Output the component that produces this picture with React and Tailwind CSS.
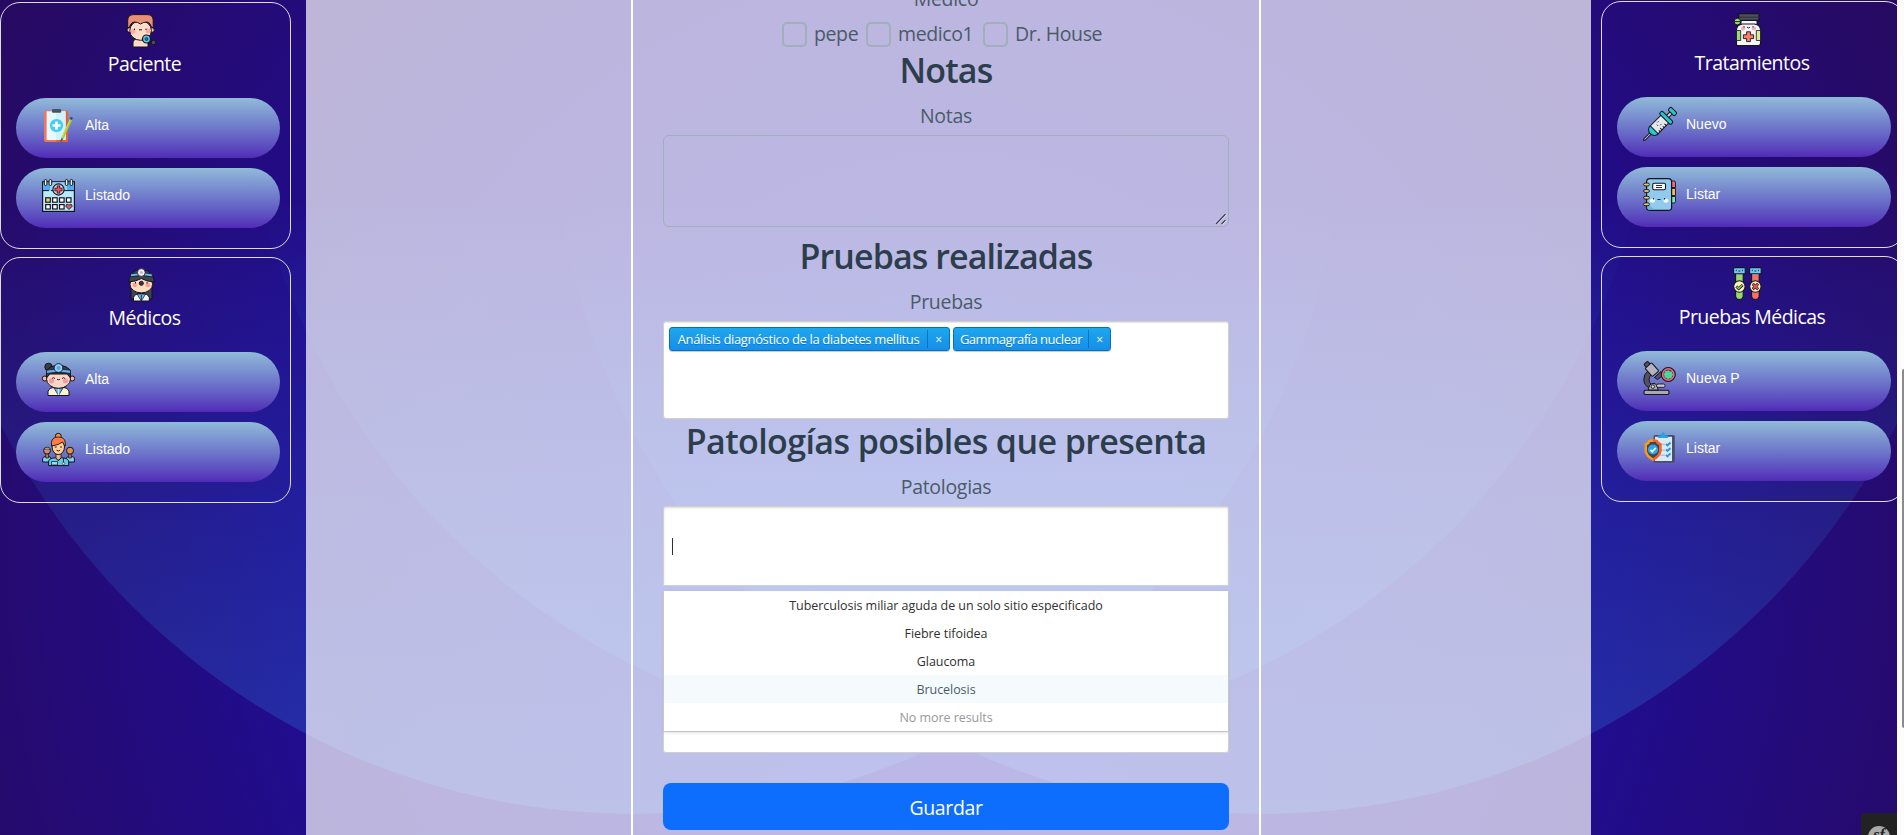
import React from "react";

const K = "#15131c";

function Icon({ children, className = "" }) {
  return (
    <svg viewBox="0 0 33 33" className={`h-[33px] w-[33px] shrink-0 overflow-visible ${className}`} fill="none">
      {children}
    </svg>
  );
}

const PatientIcon = () => (
  <Icon>
    <path d="M8 33v-4q0-4 5-4h5q5 0 5 4v4z" fill="#ffdcc8" stroke={K} />
    <circle cx="4.3" cy="16" r="2.3" fill="#ffc9b4" stroke={K} />
    <circle cx="27" cy="16" r="2.3" fill="#ffc9b4" stroke={K} />
    <ellipse cx="15.6" cy="16.5" rx="10.8" ry="9.8" fill="#ffdcc8" stroke={K} />
    <path d="M2.700 14V6.500q0-5.900 6-5.900h13.500q6 0 6 5.900V14q-2.200-.5-3.200-4-1-2-3.500-2-3 0-6 2-3-2-6-2-2.500 0-3.500 2-1 3.500-3.300 4z" fill="#e98f76" stroke={K} />
    <circle cx="8" cy="17.500" r="2.400" fill="#ffa6a6" />
    <circle cx="23" cy="17" r="2.400" fill="#ffa6a6" />
    <path d="M9.500 14.600v1.400M21 14.600v1.400M14 15.800h3" stroke={K} />
    <path d="M25 27l3.500 1.500" stroke={K} strokeWidth="2" />
    <circle cx="28.400" cy="28.500" r="2.300" fill="#4a4a5c" stroke={K} />
    <circle cx="21.500" cy="25" r="4" fill="#62c4e4" stroke={K} strokeWidth="1.200" />
    <circle cx="21.500" cy="25" r="1.500" fill="#2b7ba8" stroke={K} strokeWidth=".6" />
  </Icon>
);

const ClipboardIcon = () => (
  <Icon>
    <rect x="2" y="1.500" width="24" height="31.500" rx="2" fill="#f4755c" />
    <path d="M14 33h10a2 2 0 002-2V3.500a2 2 0 00-2-2z" fill="#e0603f" />
    <rect x="4.600" y="2.300" width="19" height="28.700" fill="#e6fafe" />
    <path d="M14 2.300h9.600V31H14z" fill="#d3f1f8" />
    <rect x="10" y="0" width="9.200" height="3.800" rx="1" fill="#46565f" />
    <circle cx="14.500" cy="16.500" r="6.600" fill="#45ccf0" />
    <path d="M14.500 12.500v8M10.500 16.500h8" stroke="#fff" strokeWidth="2.600" />
    <path d="M29 10.500L20.300 29.500" stroke="#a9c93a" strokeWidth="2.600" />
    <path d="M28.300 10.300L19.800 29" stroke="#cfe15a" strokeWidth="1" />
    <path d="M28.800 10.600l1-2.300" stroke="#4a4a4a" strokeWidth="2.600" />
    <path d="M20.300 29.300l-1.300 3" stroke="#555e3a" strokeWidth="1.800" />
  </Icon>
);

const CalendarIcon = () => (
  <Icon>
    <rect x=".6" y="2.800" width="31.800" height="29.600" fill="#b9eafc" stroke={K} strokeWidth="1.200" />
    <path d="M1.200 3.400h30.600v8H1.200z" fill="#51aaf0" />
    <path d="M8 3.400h17v8H8z" fill="#8fd3fa" />
    <path d="M1 11.600h6M9 11.600h23" stroke={K} strokeWidth="1" />
    {[3.600, 8.400, 24.600, 29.400].map((x) => (
      <rect key={x} x={x - 1.300} y=".5" width="2.600" height="6" rx="1.300" fill="#eef2f6" stroke={K} />
    ))}
    <circle cx="16.500" cy="10.500" r="5.600" fill="#dcd3d8" stroke={K} strokeWidth="1.100" />
    <path d="M16.500 6.500v8M12.500 10.500h8" stroke={K} strokeWidth="3.400" />
    <path d="M16.500 7.200v6.600M13.200 10.500h6.600" stroke="#f0556a" strokeWidth="1.800" />
    {[3.700, 10.600, 17.500, 24.400].map((x, i) => (
      <rect key={x} x={x} y="18.800" width="4.600" height="4.400" fill={i === 0 ? "#f5d76b" : "#fff"} stroke={K} strokeWidth="1.200" />
    ))}
    {[3.700, 10.600, 17.500].map((x) => (
      <rect key={x} x={x} y="25.600" width="4.600" height="4.400" fill="#fff" stroke={K} strokeWidth="1.200" />
    ))}
    <path d="M27 30.500l-3-3q-.5-2 1.300-2.200 1.200 0 1.700 1 .5-1 1.700-1 1.800.2 1.300 2.200z" fill="#f0556a" stroke={K} strokeWidth=".9" />
  </Icon>
);

const DoctorIcon = () => (
  <Icon>
    <path d="M6 12h21v19H6z" fill="#3c4452" stroke={K} />
    <path d="M8.500 33v-3.500q1-4 7.800-4t8 4V33z" fill="#f4f6fa" stroke={K} />
    <path d="M12 26l4.300 7 4.300-7z" fill="#6db4ee" stroke={K} strokeWidth=".7" />
    <path d="M16.300 27v6" stroke={K} strokeWidth=".8" />
    <ellipse cx="16.300" cy="16.300" rx="11.300" ry="8.600" fill="#fbdcc1" stroke={K} />
    <path d="M3.500 14q.5-4 2-6.500Q9 1.500 16.300 1.500t11 6q1.500 2.500 2 6.500-8-.5-13-3.500-5 3-12.800 3.500z" fill="#3c4452" stroke={K} />
    <path d="M5.500 8.800q11-2.500 21.800 0V6q-11-3-21.800 0z" fill="#6db9f2" stroke={K} strokeWidth=".8" />
    <circle cx="16.300" cy="4.500" r="3.900" fill="#eef0f3" stroke={K} strokeWidth=".8" />
    <circle cx="16.300" cy="4.500" r="1.500" fill="#b9bfc8" />
    <circle cx="9.800" cy="17" r="2.200" fill="#ff9d86" />
    <circle cx="22.800" cy="17" r="2.200" fill="#ff9d86" />
    <path d="M10.500 14v1.400M22 14v1.400" stroke={K} />
    <circle cx="16.300" cy="15.300" r="2.100" fill="#39333e" stroke={K} strokeWidth=".8" />
  </Icon>
);

const NurseIcon = () => (
  <Icon>
    <circle cx="6.500" cy="3.900" r="3.700" fill="#3a3c46" stroke={K} />
    <path d="M6 32.500v-4q1-4 7-4h7.500q5.500 0 6.500 4v4z" fill="#fbf3d2" stroke={K} />
    <path d="M12 25l4.500 7.500L21 25z" fill="#5fb4ee" stroke={K} strokeWidth=".7" />
    <path d="M16.500 26v6" stroke="#c4e6fb" strokeWidth="1.500" />
    <circle cx="2.800" cy="15.500" r="2.500" fill="#fcb9a0" stroke={K} />
    <circle cx="30.200" cy="15.500" r="2.500" fill="#fcb9a0" stroke={K} />
    <ellipse cx="16.500" cy="16" rx="12" ry="9.300" fill="#fdd5c4" stroke={K} />
    <path d="M4.500 14.500V8q3-5.500 12-5.500t12 5.500v6.500q-2-1-3-3.500h-18q-1 2.500-3 3.500z" fill="#3a3c46" stroke={K} />
    <path d="M4.500 10.500q12-2.500 24 0V7.200q-12-3-24 0z" fill="#5fb0f0" stroke={K} strokeWidth=".8" />
    <circle cx="16.500" cy="5" r="4.400" fill="#8fd0fb" stroke={K} strokeWidth=".9" />
    <circle cx="16.500" cy="5" r="2" fill="#5ba7ec" />
    <circle cx="9.500" cy="17.800" r="2.600" fill="#f49aa8" />
    <circle cx="23.500" cy="17.800" r="2.600" fill="#f49aa8" />
    <path d="M10 15.500l1.500-.8 1.500.8M20 15.500l1.500-.8 1.500.8M15 16.200q1.500 1.300 3 0" stroke={K} strokeWidth=".9" />
  </Icon>
);

const TeamIcon = () => (
  <Icon>
    <path d="M.6 29v-3q0-2.500 4.400-2.500T9 26v3zM24 29v-3q0-2.500 4.400-2.500t4 2.500v3z" fill="#7fd4f3" stroke={K} />
    <path d="M3.800 20h2.600v5H3.800zM26.700 20h2.600v5h-2.600z" fill="#c98657" stroke={K} strokeWidth=".8" />
    <circle cx="5" cy="17.700" r="3.400" fill="#cf8f66" stroke={K} />
    <path d="M2 16q3-3.500 6.500 0z" fill="#d9dbe2" stroke={K} strokeWidth=".6" />
    <circle cx="28" cy="17.700" r="3.500" fill="#dd8f52" stroke={K} />
    <circle cx="16.300" cy="3.300" r="3" fill="#ff9440" stroke={K} />
    <path d="M14 20h5v7h-5z" fill="#f7b377" stroke={K} strokeWidth=".8" />
    <ellipse cx="16.300" cy="14" rx="6.200" ry="7.600" fill="#ffcf94" stroke={K} />
    <path d="M9.500 13V9.500Q10 4 16.300 4T23.300 9.500V13q-2-1.500-2.700-4-3.500 3-11.100 4z" fill="#ff7d45" stroke={K} strokeWidth=".9" />
    <path d="M12.700 14h2M18 14h2M14.500 17.200q1.800 1.600 3.600 0" stroke={K} strokeWidth=".9" />
    <path d="M6.600 32.600V28q1-3 7-3.200l2.800 3 2.800-3q6.500.2 7.500 3.200v4.600z" fill="#61cbea" stroke={K} />
    <path d="M9.500 28.500h6V32h-6z" fill="#8be3f8" stroke={K} strokeWidth=".7" />
    <path d="M21.500 25v5" stroke={K} strokeWidth=".8" />
    <circle cx="21.500" cy="30.500" r="1.200" fill="#fff" stroke={K} strokeWidth=".6" />
  </Icon>
);

const BottleIcon = () => (
  <Icon>
    <rect x="9" y="7" width="16" height="5" fill="#f5f6fa" stroke={K} />
    <path d="M5 32.500q-.5-.5-.5-2V17q0-5 6-6h12q6 1 6 6v13.500q0 2-2 2H7q-1.500 0-2 0z" fill="#f5f6fa" stroke={K} strokeWidth="1.100" />
    <rect x="6.800" y=".6" width="20.200" height="6.800" rx="1" fill="#4d505d" stroke={K} strokeWidth="1.100" />
    <path d="M7 4.200h20" stroke="#2c2e38" />
    <path d="M4.500 17.500h4.200v10H4.500z" fill="#97de72" stroke={K} strokeWidth=".8" />
    <path d="M24.300 17.500h4.200v10h-4.200z" fill="#d7ee8d" stroke={K} strokeWidth=".8" />
    <circle cx="11" cy="15.500" r="2.100" fill="#ffaab4" />
    <circle cx="22" cy="15.500" r="2.100" fill="#ffaab4" />
    <path d="M12 13v1.500M21 13v1.500M15 14.200q1.500 1.500 3 0" stroke={K} strokeWidth=".9" />
    <path d="M14.600 18.800h3.800v3h3.200v3.800h-3.200v3h-3.800v-3h-3.200v-3.800h3.200z" fill="#ff8166" stroke={K} strokeWidth=".9" />
    <circle cx="5.400" cy="8.600" r="3.300" fill="#98df73" stroke={K} />
    <path d="M2.200 8.600h6.400" stroke={K} strokeWidth=".9" />
  </Icon>
);

const SyringeIcon = () => (
  <Icon>
    <g transform="rotate(45 16.500 16.500)" stroke={K}>
      <path d="M15.500 29h2v8.500l-1 1.500-1-1.500z" fill="#bfc4cf" />
      <rect x="15" y="-1" width="3" height="8" fill="#d3d6de" />
      <rect x="12" y="-4" width="9" height="4.200" rx="1.500" fill="#26c8cf" />
      <rect x="11" y="8" width="11" height="18" rx="1.500" fill="#e4e7ee" />
      <path d="M11 24h11v1.500q-1.500 4-5.500 4T11 25.500z" fill="#26c8cf" />
      <rect x="8.500" y="5" width="16" height="4" rx="1.500" fill="#26c8cf" />
      <path d="M22 12.500h-2.500M22 15.500h-1.800M22 18.500h-2.500M22 21.200h-1.800" />
      <path d="M13.500 15v1.500M17.500 15v1.500M14.800 18.500h1.500" strokeWidth=".9" />
    </g>
  </Icon>
);

const NotebookIcon = () => (
  <Icon>
    <path d="M28.500 3h2.500a1.500 1.500 0 011.500 1.500V9.500h-4z" fill="#ee6877" stroke={K} strokeWidth=".9" />
    <path d="M28.500 10.500h4v7h-4z" fill="#f3bb62" stroke={K} strokeWidth=".9" />
    <path d="M28.500 18.500h4v5a1.500 1.500 0 01-1.500 1.500h-2.500z" fill="#7fe3bb" stroke={K} strokeWidth=".9" />
    <rect x="3.600" y=".6" width="25" height="31.800" rx="3.200" fill="#90caec" stroke={K} strokeWidth="1.200" />
    <path d="M4.500 22q2 8 8 9.500H7q-2.500 0-2.500-2.500z" fill="#6db4e2" />
    <rect x="9.700" y="5.300" width="12.800" height="6.400" rx="1.500" fill="#fff" stroke={K} strokeWidth="1.100" />
    <path d="M13 7.500h6M13 9.500h6" stroke={K} strokeWidth=".9" />
    {[6.500, 13, 19.700, 26.300].map((y) => (
      <rect key={y} x=".6" y={y - 1.400} width="5.800" height="2.800" rx="1.400" fill="#efc86a" stroke={K} strokeWidth=".9" />
    ))}
    <ellipse cx="9.500" cy="22.800" rx="2.700" ry="2" fill="#eef8ff" />
    <ellipse cx="23" cy="22.800" rx="2.700" ry="2" fill="#eef8ff" />
    <path d="M10.500 20v1.500M21.500 20v1.500M14.500 21.500h3" stroke={K} strokeWidth=".9" />
  </Icon>
);

const TubesIcon = () => (
  <Icon>
    {[
      { x: 0, c: "#95d86f" },
      { x: 16, c: "#f96f66" },
    ].map((t) => (
      <g key={t.x} transform={`translate(${t.x} 0)`}>
        <path d="M3.600 6h7.600v23.500q-.6 3-3.800 3t-3.800-3z" fill={t.c} stroke={K} strokeWidth="1.100" />
        <path d="M4.200 7h6.400v1H4.200z" fill="#fff" />
        <rect x="1.600" y=".6" width="11.600" height="6.300" rx="1" fill="#6fc9f5" stroke={K} strokeWidth="1.100" />
        <path d="M4.300 2.800v1.300M10.400 2.800v1.300M6.300 4h2" stroke={K} strokeWidth=".9" />
        <circle cx="7.400" cy="19.500" r="5.700" fill="#fdf0c4" stroke={K} strokeWidth="1.100" />
      </g>
    ))}
    <path d="M4.300 19.500l2.400 2.200 4-3.800" stroke={K} strokeWidth="2.800" />
    <path d="M4.600 19.700l2.100 1.800 3.700-3.400" stroke="#7fcf5a" strokeWidth="1.400" />
    <path d="M20.700 16.800l5.400 5.400M26.100 16.800l-5.400 5.400" stroke={K} strokeWidth="2.800" />
    <path d="M21 17.100l4.800 4.800M25.800 17.100L21 21.900" stroke="#f2554e" strokeWidth="1.500" />
  </Icon>
);

const MicroscopeIcon = () => (
  <Icon>
    <path d="M5.500 8.500Q.6 12 .8 17.500T6 26l3-2.500Q5.800 20.500 6 17.500t3-5.500z" fill="#55525e" stroke={K} />
    <rect x="1" y="28.200" width="25" height="4.300" rx="1.500" fill="#aba8b2" stroke={K} strokeWidth="1.100" />
    <path d="M5.500 28q0-6 4.500-6.500t5 6.500z" fill="#aba8b2" stroke={K} />
    <rect x="13.500" y="22" width="8.500" height="3.300" rx="1.500" fill="#cfccd6" stroke={K} strokeWidth=".9" />
    <circle cx="9.800" cy="24.600" r="1.700" fill="#dfe0e6" stroke={K} strokeWidth=".9" />
    <g transform="rotate(-42 10 9)" stroke={K}>
      <rect x="7.500" y="-2" width="5" height="4.500" rx="1" fill="#55525e" />
      <rect x="5.800" y="1.800" width="8.600" height="11" rx="1" fill="#b7b4be" />
    </g>
    <path d="M11.500 15.500l6.500-6 2.500 3.500-6 4.500z" fill="#55525e" stroke={K} />
    <circle cx="25.300" cy="12.500" r="7" fill="#f2697f" stroke={K} strokeWidth="1.100" />
    <circle cx="25.300" cy="12.500" r="4.900" fill="#57424f" />
    <path d="M25.300 8.200l1.500 1.200 2.300.2.200 1.900 1 1.300-1.300 1.500-.5 1.900-2 .1-1.500 1-1.400-1.200-2-.5-.1-1.800-1-1.500 1.200-1.400.5-2 1.900 0z" fill="#4fd39b" />
  </Icon>
);

const ShieldListIcon = () => (
  <Icon>
    <rect x="10.500" y="3" width="21.300" height="27.800" rx="1.500" fill="#4a4e69" />
    <path d="M12 4.800h17V29H12z" fill="#dce9f5" />
    <path d="M15 6V3.500h3Q18.300.5 20 .3t2 3.200h3V6z" fill="#2ea2e6" />
    <path d="M17 12.500h5M18 18h4M17 23.300h5" stroke="#b3c5da" strokeWidth="1.500" />
    <path d="M23 12l1.500 1.500 3-3M23 17.500l1.500 1.500 3-3M23 22.800l1.500 1.500 3-3" stroke="#2795dd" strokeWidth="1.900" />
    <path d="M1.500 11.500q3-.5 4-3.500 4.500-1.500 9 0 1 3 4 3.500v8Q17.500 25 10 29 2.500 25 1.500 19.500z" fill="#f99a1d" />
    <path d="M10 7.300q2.500 0 4.500.7 1 3 4 3.500v8Q17.500 25 10 29z" fill="#f2652a" />
    <path d="M4 13.200q2.500-1 3.300-3.200h5.400q.8 2.200 3.300 3.200v6q-.8 3.800-6 7-5.200-3.200-6-7z" fill="#3f4358" />
    <circle cx="10" cy="17.500" r="5.100" fill="#2ea6ea" />
    <path d="M7.500 17.800l1.800 1.800 3.500-3.800" stroke="#e6f5ff" strokeWidth="1.900" />
  </Icon>
);

function MenuCard({ icon, title, items, className, listClass }) {
  return (
    <section className={`flex shrink-0 flex-col items-center rounded-[20px] border border-[#dedbea] ${className}`}>
      <div className="mr-[9px]">{icon}</div>
      <h2 className="mt-[2px] mr-[2px] h-[30px] font-['Open_Sans','Noto_Sans',sans-serif] text-[19.5px] leading-[30px] tracking-[-0.027em] text-white">
        {title}
      </h2>
      <div className={`mt-[19px] flex w-full flex-col gap-[10px] pl-[15px] ${listClass}`}>
        {items.map((it) => (
          <button
            key={it.label}
            className="flex h-[60px] w-full items-start rounded-[30px] bg-linear-to-b from-[#91bad8] to-[#5229b7] pt-[11px] pl-[26px] text-left"
          >
            {it.icon}
            <span className="ml-[10px] font-['Liberation_Sans',Arial,sans-serif] text-[14px] leading-[32px] text-white">
              {it.label}
            </span>
          </button>
        ))}
      </div>
    </section>
  );
}

function Backdrop() {
  return (
    <svg className="absolute inset-0" width="1897" height="835" viewBox="0 0 1897 835">
      <defs>
        <radialGradient id="base" gradientUnits="userSpaceOnUse" cx="948.5" cy="560" r="1120">
          <stop offset="0" stopColor="#1c10b6" />
          <stop offset=".55" stopColor="#200d94" />
          <stop offset=".8" stopColor="#240b76" />
          <stop offset="1" stopColor="#270a5e" />
        </radialGradient>
        <linearGradient id="disc" gradientUnits="userSpaceOnUse" x1="0" y1="200" x2="0" y2="814">
          <stop offset="0" stopColor="#2e96f4" stopOpacity="0" />
          <stop offset="1" stopColor="#34a6ff" stopOpacity=".24" />
        </linearGradient>
      </defs>
      <rect width="1897" height="835" fill="url(#base)" />
      <circle cx="634" cy="104" r="710" fill="url(#disc)" />
      <circle cx="1263" cy="104" r="710" fill="url(#disc)" />
      <circle cx="948.5" cy="29" r="710" fill="url(#disc)" />
    </svg>
  );
}

const Label = ({ children, className = "" }) => (
  <p className={`h-[30px] shrink-0 text-center text-[19.5px] leading-[32px] tracking-[-0.015em] text-[#4a5b67] ${className}`}>{children}</p>
);

const Heading = ({ children, className = "" }) => (
  <h1 className={`h-[40px] shrink-0 text-center text-[34px] leading-[40px] font-semibold whitespace-nowrap text-[#2c3e4c] ${className}`}>
    {children}
  </h1>
);

const Check = ({ label, className = "" }) => (
  <label className={`flex h-[30px] items-center ${className}`}>
    <span className="mt-[2px] h-[25px] w-[25px] shrink-0 rounded-[5px] border-2 border-[#a2afb9]" />
    <span className="ml-[7px] text-[19.5px] leading-[30px] tracking-[-0.02em] whitespace-nowrap text-[#4a5b67]">
      <span className="mt-[2px] block">{label}</span>
    </span>
  </label>
);

const Tag = ({ children, className = "" }) => (
  <span
    className={`flex h-[24px] items-center rounded-[3px] border border-[#0073bb] bg-linear-to-b from-[#1da7ee] to-[#178ee9] text-[13px] text-white shadow-[0_1px_0_rgba(0,0,0,0.2)] ${className}`}
  >
    <span className="mt-px flex-1 text-center whitespace-nowrap [text-shadow:0_1px_0_rgba(0,51,83,0.3)]">{children}</span>
    <span className="flex h-[18px] w-[22px] items-center justify-center border-l border-[#0073bb] pt-px text-[12px]">×</span>
  </span>
);

const options = ["Tuberculosis miliar aguda de un solo sitio especificado", "Fiebre tifoidea", "Glaucoma"];

export default function App() {
  return (
    <div className="relative flex h-[835px] w-[1904px] overflow-hidden bg-[#1f0c90]">
      <Backdrop />

      <aside className="relative flex w-[306px] shrink-0 flex-col gap-2 pt-[2px]">
        <MenuCard
          className="h-[247px] w-[291px] pt-[11px]"
          listClass="pr-[10px]"
          icon={<PatientIcon />}
          title="Paciente"
          items={[
            { label: "Alta", icon: <ClipboardIcon /> },
            { label: "Listado", icon: <CalendarIcon /> },
          ]}
        />
        <MenuCard
          className="h-[246px] w-[291px] pt-[10px]"
          listClass="pr-[10px]"
          icon={<DoctorIcon />}
          title="Médicos"
          items={[
            { label: "Alta", icon: <NurseIcon /> },
            { label: "Listado", icon: <TeamIcon /> },
          ]}
        />
      </aside>

      <main className="relative flex w-[1285px] shrink-0 bg-white/70 pl-[325px]">
        <form className="flex h-[835px] w-[630px] flex-col border-x-2 border-white px-[30px] font-['Open_Sans','Noto_Sans',sans-serif]">
          <Label className="-mt-[17px]">Médico</Label>
          <div className="mt-[5px] flex h-[30px] shrink-0 pl-[119px]">
            <Check label="pepe" className="w-[84px]" />
            <Check label="medico1" className="w-[117px]" />
            <Check label="Dr. House" />
          </div>
          <Heading className="mt-[2px] tracking-[-0.025em]">Notas</Heading>
          <Label className="mt-[10px]">Notas</Label>
          <div className="mt-[5px] flex h-[92px] shrink-0 items-end justify-end rounded-[6px] border border-[#a2afb9] p-[1px]">
            <svg width="12" height="12" viewBox="0 0 12 12" fill="none">
              <path d="M1 11L11 1M7 11l4-4" stroke="#fff" strokeWidth="2.500" opacity=".6" />
              <path d="M1 11L10.500 1M6.500 11L10.500 7" stroke="#3c3a4c" strokeWidth="1.300" />
            </svg>
          </div>
          <Heading className="mt-[9px] tracking-[-0.027em]">Pruebas realizadas</Heading>
          <Label className="mt-[10px]">Pruebas</Label>
          <div className="mt-[5px] flex h-[98px] shrink-0 items-start gap-[3px] rounded-[3px] border border-[#d0d0d0] bg-white pt-[5px] pl-[5px] shadow-[inset_0_1px_1px_rgba(0,0,0,0.1)]">
            <Tag className="w-[281px] tracking-[-0.028em]">Análisis diagnóstico de la diabetes mellitus</Tag>
            <Tag className="w-[158px] tracking-[-0.036em]">Gammagrafía nuclear</Tag>
          </div>
          <Heading className="mt-[2px] tracking-[-0.0175em]">Patologías posibles que presenta</Heading>
          <Label className="mt-[10px]">Patologias</Label>
          <div className="mt-[5px] flex h-[80px] shrink-0 items-center rounded-t-[3px] border border-[#d0d0d0] bg-white pl-[8px] shadow-[inset_0_1px_2px_rgba(0,0,0,0.15)]">
            <span className="h-[17px] w-px bg-[#303030]" />
          </div>
          <div className="mt-[5px] flex h-[162px] shrink-0 flex-col rounded-b-[3px] border border-t-0 border-[#d0d0d0] bg-white">
            <ul className="flex h-[141px] flex-col border-b border-[#c4c4c8] text-center text-[12.5px] leading-[30px] tracking-[-0.004em] text-[#303030] shadow-[0_1px_3px_rgba(0,0,0,0.12)]">
              {options.map((o) => (
                <li key={o} className="h-[28px]">
                  {o}
                </li>
              ))}
              <li className="h-[28px] bg-[#f5fafd] text-[#495c68]">Brucelosis</li>
              <li className="h-[28px] text-[#989898]">No more results</li>
            </ul>
          </div>
          <button className="mt-[30px] h-[47px] shrink-0 rounded-[8px] bg-[#0d6efd] text-[19.5px] leading-[49px] tracking-[-0.02em] text-white">
            Guardar
          </button>
        </form>
      </main>

      <aside className="relative flex w-[306px] shrink-0 flex-col gap-2 overflow-hidden pt-px pl-[10px]">
        <MenuCard
          className="h-[247px] w-[304px] pt-[11px]"
          listClass="pr-[13px]"
          icon={<BottleIcon />}
          title="Tratamientos"
          items={[
            { label: "Nuevo", icon: <SyringeIcon /> },
            { label: "Listar", icon: <NotebookIcon /> },
          ]}
        />
        <MenuCard
          className="h-[246px] w-[304px] pt-[10px]"
          listClass="pr-[13px]"
          icon={<TubesIcon />}
          title="Pruebas Médicas"
          items={[
            { label: "Nueva P", icon: <MicroscopeIcon /> },
            { label: "Listar", icon: <ShieldListIcon /> },
          ]}
        />
        <div className="absolute right-0 bottom-0 flex h-[22px] w-[36px] justify-center overflow-hidden rounded-tl-[4px] bg-[#222] pt-[13px]">
          <span className="h-[22px] w-[22px] shrink-0 rounded-full bg-[#aaa] text-center font-['Liberation_Serif',serif] text-[16px] leading-[17px] font-bold text-[#222] italic">
            sf
          </span>
        </div>
      </aside>

      <div className="relative flex w-[7px] shrink-0 flex-col items-end bg-[#fcfcfc] pt-[369px]">
        <div className="h-[359px] w-[2px] rounded-l-[2px] bg-[#8b8b8b]" />
      </div>
    </div>
  );
}
